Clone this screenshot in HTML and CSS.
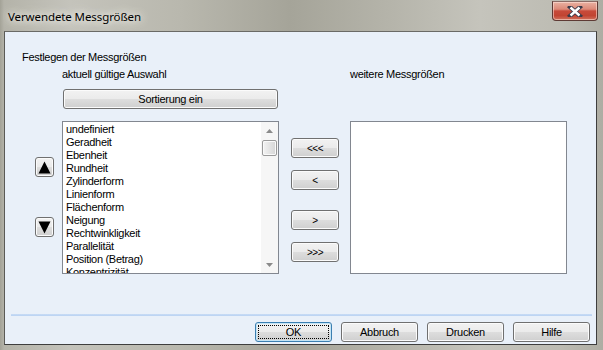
FILE: index.html
```html
<!DOCTYPE html>
<html lang="de">
<head>
<meta charset="utf-8">
<title>Verwendete Messgrößen</title>
<link rel="stylesheet" href="styles.css">
</head>
<body>
<div class="window">
  <div class="titlebar">
    <span class="title">Verwendete Messgrößen</span>
    <button class="close" aria-label="Schließen">
      <svg width="16" height="11" viewBox="0 0 16 11"><path d="M3 1 L13 10 M13 1 L3 10" stroke="#3a3a4a" stroke-width="4.2" stroke-linecap="square"/><path d="M3.5 1.5 L12.5 9.5 M12.5 1.5 L3.5 9.5" stroke="#fff" stroke-width="2.4"/></svg>
    </button>
  </div>
  <div class="client">
    <div class="group-label">Festlegen der Messgrößen</div>
    <div class="col-labels">
      <span class="lbl-left">aktuell gültige Auswahl</span>
      <span class="lbl-right">weitere Messgrößen</span>
    </div>
    <button class="btn sort">Sortierung ein</button>
    <div class="main">
      <div class="updown">
        <button class="btn arrow"><svg width="13" height="13" viewBox="0 0 13 13"><path d="M6.5 0.5 L12.5 12.5 L0.5 12.5 Z" fill="#000"/></svg></button>
        <button class="btn arrow"><svg width="13" height="13" viewBox="0 0 13 13"><path d="M0.5 0.5 L12.5 0.5 L6.5 12.5 Z" fill="#000"/></svg></button>
      </div>
      <div class="listbox">
        <ul class="items">
          <li>undefiniert</li>
          <li>Geradheit</li>
          <li>Ebenheit</li>
          <li>Rundheit</li>
          <li>Zylinderform</li>
          <li>Linienform</li>
          <li>Flächenform</li>
          <li>Neigung</li>
          <li>Rechtwinkligkeit</li>
          <li>Parallelität</li>
          <li>Position (Betrag)</li>
          <li>Konzentrizität</li>
        </ul>
        <div class="scrollbar">
          <div class="sb-btn"><svg width="7" height="4" viewBox="0 0 7 4"><path d="M3.5 0 L7 4 L0 4 Z" fill="#8a8a8a"/></svg></div>
          <div class="sb-track"><div class="sb-thumb"></div></div>
          <div class="sb-btn"><svg width="7" height="4" viewBox="0 0 7 4"><path d="M0 0 L7 0 L3.5 4 Z" fill="#8a8a8a"/></svg></div>
        </div>
      </div>
      <div class="movers">
        <button class="btn mv">&lt;&lt;&lt;</button>
        <button class="btn mv">&lt;</button>
        <button class="btn mv gap">&gt;</button>
        <button class="btn mv">&gt;&gt;&gt;</button>
      </div>
      <div class="listbox empty"></div>
    </div>
    <div class="separator"></div>
    <div class="footer">
      <button class="btn fbtn default">OK</button>
      <button class="btn fbtn">Abbruch</button>
      <button class="btn fbtn">Drucken</button>
      <button class="btn fbtn">Hilfe</button>
    </div>
  </div>
</div>
</body>
</html>
```
FILE: styles.css
```css
* { box-sizing: border-box; }
html, body { margin: 0; padding: 0; }
body {
  width: 603px;
  height: 350px;
  overflow: hidden;
  font-family: "Liberation Sans", Arial, sans-serif;
  font-size: 11px;
  letter-spacing: -0.3px;
  color: #000;
}
.window {
  width: 603px;
  height: 350px;
  display: flex;
  flex-direction: column;
  background:
    linear-gradient(90deg, #a3a297 0px, #b4b3a9 4px, #c4c3bb 70px, #b9b8ae 180px, #a5a499 290px, #b5b4aa 390px, #c5c4bc 480px, #bdbcb3 560px, #aeada3 603px);
}
.titlebar {
  height: 31px;
  display: flex;
  align-items: flex-start;
  justify-content: space-between;
  padding: 0 5px 0 8px;
}
.title {
  font-family: "Noto Sans", "Open Sans", sans-serif;
  font-size: 11.5px;
  line-height: 16px;
  margin-top: 9px;
  color: #000;
  text-shadow: 0 0 6px #f2f1ec, 0 0 10px #e8e7e0, 0 0 14px #e2e1da;
  letter-spacing: -0.1px;
}
.close {
  width: 46px;
  height: 20px;
  margin-top: 1px;
  padding: 0;
  border: 1px solid #5e3a34;
  border-top-color: #8a6a64;
  border-radius: 0 0 4px 4px;
  background: linear-gradient(#e9b1a2 0%, #dc8a78 40%, #c74a3a 50%, #c14432 75%, #d0705c 100%);
  box-shadow: inset 0 0 0 1px rgba(255, 230, 220, 0.55);
  display: flex;
  align-items: center;
  justify-content: center;
}
.client {
  flex: 1;
  margin: 0 6px 5px 4px;
  border: 1px solid #3e3e3e;
  border-top-color: #6a6a66;
  border-left-color: #5a5a56;
  background: #e9f0f9;
  padding-top: 19px;
  display: flex;
  flex-direction: column;
}
.group-label {
  padding-left: 17px;
  line-height: 13px;
}
.col-labels {
  display: flex;
  margin-top: 4px;
  line-height: 13px;
}
.lbl-left { margin-left: 57px; width: 288px; }
.btn {
  font-family: "Liberation Sans", Arial, sans-serif;
  font-size: 11px;
  letter-spacing: -0.3px;
  color: #000;
  border: 1px solid #707070;
  border-radius: 3px;
  background: linear-gradient(#f2f2f2 0%, #ebebeb 48%, #dddddd 52%, #cfcfcf 100%);
  box-shadow: inset 0 0 0 1px #fbfbfb;
  padding: 0;
  height: 20px;
  line-height: 17px;
}
.sort {
  width: 215px;
  margin: 8px 0 0 58px;
}
.main {
  display: flex;
  margin-top: 12px;
  height: 153px;
}
.updown {
  width: 19px;
  margin-left: 30px;
  padding-top: 36px;
  display: flex;
  flex-direction: column;
  gap: 40px;
}
.arrow {
  width: 19px;
  height: 20px;
  display: flex;
  align-items: center;
  justify-content: center;
}
.listbox {
  width: 217px;
  height: 153px;
  border: 1px solid #828790;
  background: #fff;
  margin-left: 8px;
  display: flex;
  overflow: hidden;
}
.items {
  list-style: none;
  margin: 0;
  padding: 1px 0 0 3px;
  flex: 1;
  line-height: 13px;
}
.scrollbar {
  width: 17px;
  display: flex;
  flex-direction: column;
  background: #f6f6f6;
}
.sb-btn {
  height: 17px;
  display: flex;
  align-items: center;
  justify-content: center;
}
.sb-track {
  flex: 1;
  padding: 1px 1px 0 1px;
}
.sb-thumb {
  height: 16px;
  border: 1px solid #9a9a9a;
  border-radius: 2px;
  background: linear-gradient(90deg, #f3f3f3, #e4e4e4 50%, #d6d6d6);
  box-shadow: inset 0 0 0 1px #fafafa;
}
.movers {
  width: 48px;
  margin-left: 12px;
  padding-top: 17px;
  display: flex;
  flex-direction: column;
  gap: 12px;
}
.mv { width: 48px; font-size: 10px; letter-spacing: -0.5px; }
.mv.gap { margin-top: 8px; }
.listbox.empty { margin-left: 11px; }
.separator {
  margin: 40px 4px 0 6px;
  height: 2px;
  background: linear-gradient(#c8dcf5, #b9d2f2);
}
.footer {
  display: flex;
  gap: 9px;
  padding-left: 250px;
  margin-top: 6px;
}
.fbtn { width: 77px; }
.default {
  border-color: #3c7fb1;
  box-shadow: inset 0 0 0 1px #c4e5f6;
  outline: 1px dotted #000;
  outline-offset: -4px;
}
```
